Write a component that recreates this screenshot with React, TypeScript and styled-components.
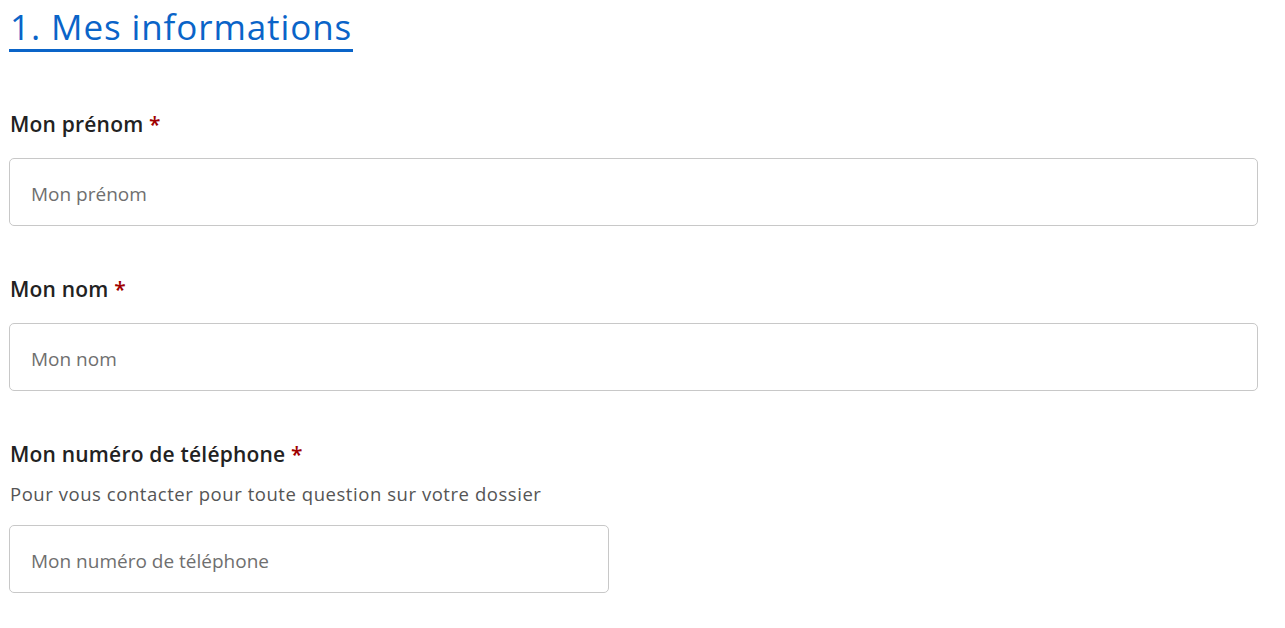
import React from "react";
import styled, { createGlobalStyle } from "styled-components";

const GlobalStyle = createGlobalStyle`
  body {
    margin: 0;
    background: #fff;
    font-family: "Open Sans", "Noto Sans", "Liberation Sans", sans-serif;
  }
`;

type FieldPropsType = {
  id: string
  label: string
  hint?: string
  narrow?: boolean
};

function Field(props: FieldPropsType) {
  return (
    <FieldBlock>
      <Label htmlFor={props.id}>
        {props.label} <Required>*</Required>
      </Label>
      {props.hint && <Hint>{props.hint}</Hint>}
      <Input id={props.id} placeholder={props.label} $narrow={props.narrow} />
    </FieldBlock>
  );
}

export default function App() {
  return (
    <>
      <GlobalStyle />
      <Page>
        <Title>1. Mes informations</Title>
        <Form>
          <Field id="prenom" label="Mon prénom" />
          <Field id="nom" label="Mon nom" />
          <Field
            id="tel"
            label="Mon numéro de téléphone"
            hint="Pour vous contacter pour toute question sur votre dossier"
            narrow
          />
        </Form>
      </Page>
    </>
  );
}

const Page = styled.div`
  width: 1249px;
  padding: 0 9px;
`;

const Title = styled.h1`
  display: inline-block;
  margin: 0;
  padding: 7px 1px 2px;
  font-size: 35px;
  font-weight: 400;
  letter-spacing: 0.9px;
  line-height: 40px;
  color: #0a64c8;
  border-bottom: 3px solid #0a64c8;
`;

const Form = styled.div`
  display: flex;
  flex-direction: column;
  gap: 50px;
  margin-top: 59px;
`;

const FieldBlock = styled.div`
  display: flex;
  flex-direction: column;
`;

const Label = styled.label`
  font-size: 21px;
  font-weight: 600;
  letter-spacing: 0.2px;
  line-height: 26px;
  color: #222;
  padding-left: 1px;
`;

const Required = styled.span`
  color: #a00000;
`;

const Hint = styled.p`
  margin: 15px 0 -2px;
  padding-left: 1px;
  font-size: 18.5px;
  letter-spacing: 0.55px;
  line-height: 24px;
  color: #555;
`;

const Input = styled.input<{ $narrow?: boolean }>`
  box-sizing: border-box;
  width: ${(p) => (p.$narrow ? "600px" : "100%")};
  height: 68px;
  margin-top: 21px;
  padding: 4px 21px 0;
  font-family: inherit;
  font-size: 19px;
  color: #222;
  background: #fff;
  border: 1px solid #c8c8c8;
  border-radius: 5px;
  outline: none;

  &::placeholder {
    color: #6f6f6f;
  }
`;
